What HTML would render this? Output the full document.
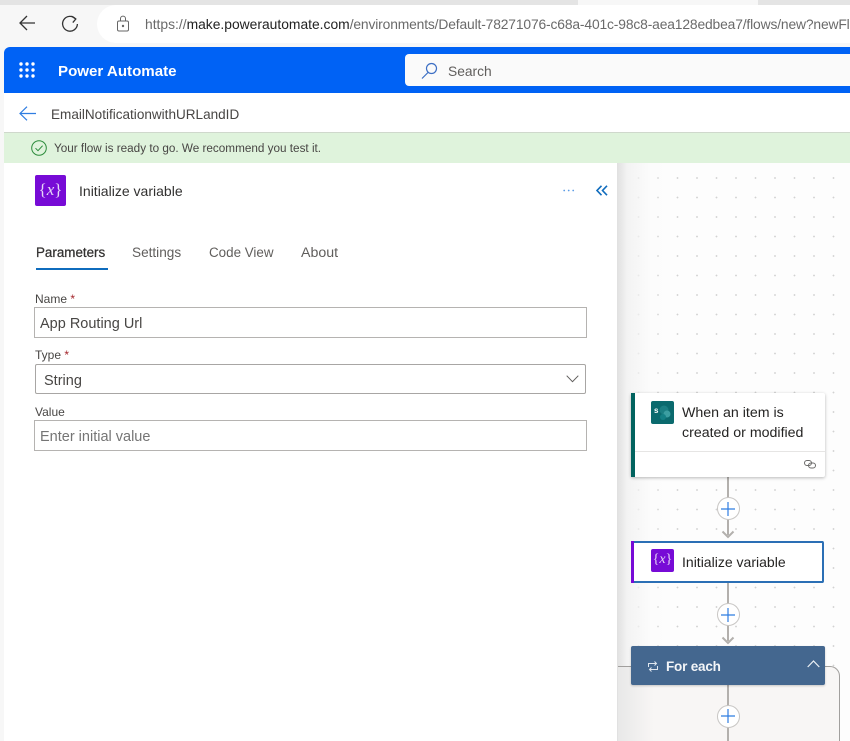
<!DOCTYPE html>
<html style="width:850px;height:741px;overflow:hidden"><head><meta charset="utf-8">
<style>
html,body{margin:0;padding:0}
body{width:850px;height:741px;overflow:hidden;position:relative;background:#f7f7f7;font-family:"Liberation Sans",sans-serif;color:#323130}
.a{position:absolute;white-space:nowrap}
svg{position:absolute;overflow:visible}
.lbl{font-size:12px;line-height:14px;color:#484644}
.inp{position:absolute;box-sizing:border-box;background:#fff;border:1px solid #b5b3b1;font-size:14.5px;line-height:33px;white-space:nowrap}
.req{color:#a4262c}
.plus{position:absolute;width:23px;height:23px;box-sizing:border-box;background:#fff;border:1px solid #c8c6c4;border-radius:50%}
.line{position:absolute;left:727px;width:2px;background:#b3b0ad}
</style></head><body>
<!-- browser chrome -->
<div class="a" style="left:0;top:0;width:850px;height:5px;background:#e4e4e4"></div>
<div class="a" style="left:578px;top:0;width:180px;height:5px;background:#f7f7f7"></div>
<div class="a" style="left:97px;top:5px;width:753px;height:38px;background:#fff;border-radius:19px 0 0 19px"></div>
<svg style="left:19px;top:15px" width="17" height="17" viewBox="0 0 17 17" fill="none" stroke="#333" stroke-width="1.3"><path d="M1 8h15M8 1L1 8l7 7"/></svg>
<svg style="left:61px;top:15px" width="18" height="18" viewBox="0 0 18 18" fill="none" stroke="#333" stroke-width="1.3"><path d="M14.5 3.8A7.4 7.4 0 1 0 16.4 9"/><path d="M10.500 1.200l4.300 2.800-3 3.600"/></svg>
<svg style="left:116px;top:15px" width="14" height="17" viewBox="0 0 14 17" fill="none" stroke="#666" stroke-width="1"><rect x="1.500" y="6" width="11" height="10" rx="1.500"/><path d="M4.500 6V3.600a2.500 2.500 0 0 1 5 0V6"/><circle cx="7" cy="11" r=".7" fill="#555"/></svg>
<div class="a" style="left:145px;top:15px;font-size:13.85px;line-height:18px;color:#6a6a6a">https://<span style="color:#222">make.powerautomate.com</span><span style="letter-spacing:-.15px">/environments/Default-78271076-c68a-401c-98c8-aea128edbea7/flows/new?newFl</span></div>
<!-- blue header -->
<div class="a" style="left:4px;top:47px;width:846px;height:46px;background:#0062f5;border-radius:6px 0 0 0"></div>
<svg style="left:19px;top:62px" width="16" height="16" viewBox="0 0 16 16" fill="#fff"><circle cx="2" cy="2" r="1.7"/><circle cx="8" cy="2" r="1.7"/><circle cx="14" cy="2" r="1.7"/><circle cx="2" cy="8" r="1.7"/><circle cx="8" cy="8" r="1.7"/><circle cx="14" cy="8" r="1.7"/><circle cx="2" cy="14" r="1.7"/><circle cx="8" cy="14" r="1.7"/><circle cx="14" cy="14" r="1.7"/></svg>
<div class="a" style="left:58px;top:63px;font-size:15.1px;line-height:18px;font-weight:bold;color:#fff">Power Automate</div>
<div class="a" style="left:405px;top:54px;width:445px;height:32px;background:#fafafa;border-radius:4px 0 0 4px"></div>
<svg style="left:421px;top:62px" width="17" height="17" viewBox="0 0 17 17" fill="none" stroke="#3d6fc4" stroke-width="1.200"><circle cx="10.500" cy="6.500" r="5"/><path d="M7 10.500L1 16.500"/></svg>
<div class="a" style="left:448px;top:63px;font-size:13.800px;line-height:18px;color:#605e5c">Search</div>
<!-- subheader -->
<div class="a" style="left:4px;top:93px;width:846px;height:39px;background:#fff"></div>
<svg style="left:19px;top:106px" width="17" height="15" viewBox="0 0 17 15" fill="none" stroke="#2f7de1" stroke-width="1.200"><path d="M1 7.500h16M8 .7L1 7.500l7 6.800"/></svg>
<div class="a" style="left:51px;top:106px;font-size:13.55px;line-height:18px;color:#484644">EmailNotificationwithURLandID</div>
<!-- green bar -->
<div class="a" style="left:4px;top:132px;width:846px;height:1px;background:#cfd8cc"></div>
<div class="a" style="left:4px;top:133px;width:846px;height:30px;background:#dff3dc"></div>
<svg style="left:31px;top:140px" width="16" height="16" viewBox="0 0 16 16" fill="none" stroke="#2a8a3a" stroke-width="1"><circle cx="8" cy="8" r="7.300"/><path d="M4.500 8.200l2.500 2.500 4.600-5"/></svg>
<div class="a" style="left:54px;top:141px;font-size:11.72px;line-height:16px;color:#484644">Your flow is ready to go. We recommend you test it.</div>
<!-- canvas -->
<div class="a" style="left:618px;top:163px;width:232px;height:578px;background-color:#fdfdfd;background-image:radial-gradient(circle at 1px 1px,#d2d2d2 .7px,transparent 1.100px);background-size:19.500px 19.500px;background-position:0 14px"></div>
<div class="a" style="left:617px;top:163px;width:50px;height:578px;background:linear-gradient(to right,#e0e0e0 0,#f3f3f3 10px,rgba(250,250,250,.3) 35px,rgba(250,250,250,0) 50px)"></div>
<!-- panel -->
<div class="a" style="left:4px;top:163px;width:613px;height:578px;background:#fff"></div>
<div class="a" style="left:35px;top:175px;width:31px;height:31px;background:#770bd6;border-radius:2px"></div>
<div class="a" style="left:35px;top:175px;width:31px;height:31px;text-align:center;font-family:'Liberation Serif',serif;font-size:17px;line-height:30px;color:#e6d5f7">{<i>x</i>}</div>
<div class="a" style="left:79px;top:182px;font-size:14.03px;line-height:18px;color:#323130">Initialize variable</div>
<svg style="left:563px;top:189px" width="12" height="3" fill="#5a9be6"><circle cx="1.200" cy="1.500" r=".9"/><circle cx="5.700" cy="1.500" r=".9"/><circle cx="10.200" cy="1.500" r=".9"/></svg>
<svg style="left:596px;top:185px" width="12" height="11" viewBox="0 0 12 11" fill="none" stroke="#0f6cbd" stroke-width="1.600"><path d="M5.500 .8L1 5.500l4.500 4.700M11 .8L6.500 5.500l4.500 4.700"/></svg>
<div class="a" style="left:36px;top:244px;font-size:13.4px;line-height:18px;color:#323130;-webkit-text-stroke:.25px #323130">Parameters</div>
<div class="a" style="left:36px;top:268px;width:72px;height:2px;background:#0f6cbd"></div>
<div class="a" style="left:132px;top:244px;font-size:13.6px;line-height:18px;color:#605e5c">Settings</div>
<div class="a" style="left:209px;top:244px;font-size:13.4px;line-height:18px;color:#605e5c">Code View</div>
<div class="a" style="left:301px;top:244px;font-size:14.200px;line-height:18px;color:#605e5c">About</div>
<div class="a lbl" style="left:35px;top:292px">Name <span class="req">*</span></div>
<div class="inp" style="left:34px;top:307px;width:553px;height:31px;padding-left:5px;color:#484644">App Routing Url</div>
<div class="a lbl" style="left:35px;top:348px">Type <span class="req">*</span></div>
<div class="inp" style="left:35px;top:364px;width:551px;height:30px;padding-left:8px;color:#484644;border-radius:2px;border-color:#a8a6a4">String</div>
<svg style="left:566px;top:375px" width="13" height="8" viewBox="0 0 13 8" fill="none" stroke="#605e5c" stroke-width="1"><path d="M.7 .7l5.800 6 5.800-6"/></svg>
<div class="a lbl" style="left:35px;top:405px">Value</div>
<div class="inp" style="left:34px;top:420px;width:553px;height:31px;padding-left:5px;color:#757575">Enter initial value</div>
<!-- loop container -->
<div class="a" style="left:618px;top:666px;width:222px;height:75px;box-sizing:border-box;background:#f8f6f5;border:1px solid #a19f9d;border-left:0;border-bottom:0;border-radius:0 10px 0 0"></div>
<div class="a" style="left:618px;top:667px;width:36px;height:74px;background:linear-gradient(to right,#e8e8e8,rgba(248,246,245,0))"></div>
<!-- connectors -->
<div class="line" style="top:477px;height:58px"></div>
<svg style="left:721px;top:530px" width="14" height="9" fill="none" stroke="#b3b0ad" stroke-width="2"><path d="M1.500 1.500L7 7l5.500-5.500"/></svg>
<div class="line" style="top:583px;height:58px"></div>
<svg style="left:721px;top:636px" width="14" height="9" fill="none" stroke="#b3b0ad" stroke-width="2"><path d="M1.500 1.500L7 7l5.500-5.500"/></svg>
<div class="line" style="top:685px;height:56px"></div>
<div class="plus" style="left:716.500px;top:497px"></div>
<svg style="left:721px;top:502px" width="14" height="14" stroke="#2f7de1" stroke-width="1.200"><path d="M7 0v14M0 7h14"/></svg>
<div class="plus" style="left:716.500px;top:603px"></div>
<svg style="left:721px;top:608px" width="14" height="14" stroke="#2f7de1" stroke-width="1.200"><path d="M7 0v14M0 7h14"/></svg>
<div class="plus" style="left:716.500px;top:705px"></div>
<svg style="left:721px;top:709px" width="14" height="14" stroke="#2f7de1" stroke-width="1.200"><path d="M7 0v14M0 7h14"/></svg>
<!-- trigger card -->
<div class="a" style="left:631px;top:393px;width:194px;height:84px;background:#fff;box-shadow:0 1px 3px rgba(0,0,0,.28);border-radius:2px"></div>
<div class="a" style="left:631px;top:393px;width:4px;height:84px;background:#02635f"></div>
<div class="a" style="left:635px;top:451px;width:190px;height:1px;background:#e6e5e4"></div>
<div class="a" style="left:651px;top:401px;width:23px;height:23px;background:#0b6a6e;border-radius:2px"></div>
<svg style="left:651px;top:401px" width="23" height="23"><circle cx="13" cy="9" r="4.500" fill="#1b7f83"/><circle cx="16" cy="13" r="3.500" fill="#3b9ea1"/><circle cx="12" cy="16" r="3" fill="#148085"/></svg>
<div class="a" style="left:654px;top:405px;font-size:8px;line-height:11px;font-weight:bold;color:#fff">s</div>
<div class="a" style="left:682px;top:404px;font-size:14.200px;line-height:19.500px;color:#252423;white-space:normal;width:135px">When an item is<br>created or modified</div>
<svg style="left:804px;top:460px" width="12" height="9" viewBox="0 0 12 9" fill="none" stroke="#6b6a69" stroke-width="1"><rect x=".5" y=".5" width="7" height="5" rx="2.500"/><rect x="4.500" y="3" width="7" height="5" rx="2.500"/></svg>
<!-- init card -->
<div class="a" style="left:631px;top:541px;width:193px;height:42px;box-sizing:border-box;background:#fff;border:2px solid #2b6fb5;border-left:0;border-radius:2px"></div>
<div class="a" style="left:631px;top:541px;width:3px;height:42px;background:#770bd6"></div>
<div class="a" style="left:651px;top:549px;width:23px;height:23px;background:#770bd6;border-radius:2px"></div>
<div class="a" style="left:651px;top:549px;width:23px;height:23px;text-align:center;font-family:'Liberation Serif',serif;font-size:14px;line-height:21px;color:#e6d5f7">{<i>x</i>}</div>
<div class="a" style="left:682px;top:553px;font-size:14.030px;line-height:18px;color:#252423">Initialize variable</div>
<!-- for each -->
<div class="a" style="left:631px;top:646px;width:194px;height:39px;background:#44678f;border-radius:2px;box-shadow:0 1px 2px rgba(0,0,0,.2)"></div>
<svg style="left:647px;top:661px" width="12" height="11" viewBox="0 0 12 11" fill="none" stroke="#dfe6ee" stroke-width="1"><path d="M10.500 5v3.500H2.500M4.500 6.500l-2 2 2 2M1.500 6V2.500h8M7.500 .5l2 2-2 2"/></svg>
<div class="a" style="left:666px;top:658px;font-size:13.5px;line-height:18px;font-weight:bold;color:#f3f5f8;letter-spacing:-.2px">For each</div>
<svg style="left:807px;top:660px" width="13" height="8" viewBox="0 0 13 8" fill="none" stroke="#eef2f6" stroke-width="1.200"><path d="M.7 7L6.500 1l5.800 6"/></svg>
</body></html>
